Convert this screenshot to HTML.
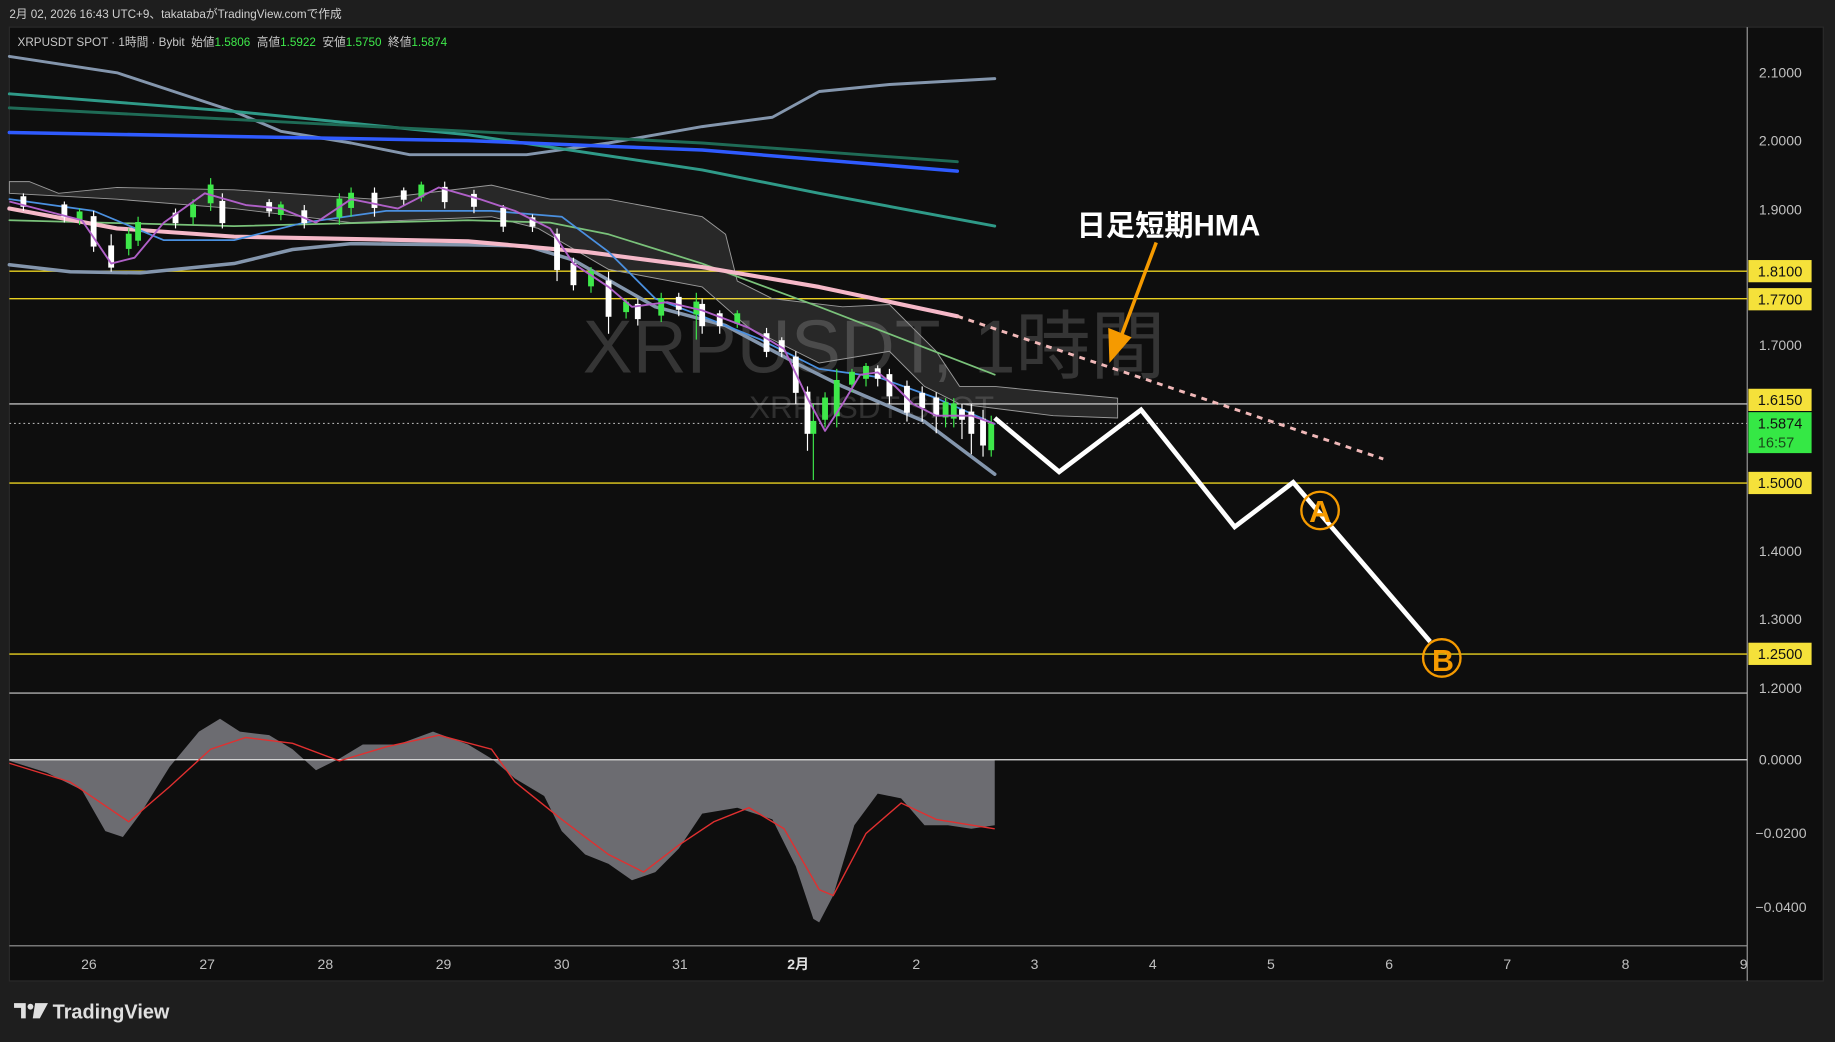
<!DOCTYPE html>
<html><head><meta charset="utf-8"><style>
html,body{margin:0;padding:0;background:#1e1e1e;width:1835px;height:1042px;overflow:hidden}
svg{display:block}
text{font-family:"Liberation Sans","Noto Sans CJK JP",sans-serif}
</style></head><body>
<svg width="1835" height="1042" viewBox="0 0 1568 890" xmlns="http://www.w3.org/2000/svg">
<rect x="0" y="0" width="1568" height="890" fill="#1e1e1e"/>
<text x="8" y="15" font-size="10" fill="#d0d0d0">2月 02, 2026 16:43 UTC+9、takatabaがTradingView.comで作成</text>
<rect x="8" y="23" width="1550" height="815" fill="#0e0e0e" stroke="#2a2a2a"/>
<line x1="1493" y1="23" x2="1493" y2="838" stroke="#9a9a9a" stroke-width="1"/>
<text x="498" y="318" font-size="64" fill="#353535">XRPUSDT, 1時間</text>
<text x="640" y="357" font-size="27" fill="#303030">XRPUSDT SPOT</text>
<text x="15" y="39" font-size="10" fill="#c8c8c8" xml:space="preserve">XRPUSDT SPOT · 1時間 · Bybit  始値<tspan fill="#3ee84a">1.5806</tspan>  高値<tspan fill="#3ee84a">1.5922</tspan>  安値<tspan fill="#3ee84a">1.5750</tspan>  終値<tspan fill="#3ee84a">1.5874</tspan></text>
<g stroke="#e8d020" stroke-width="1.2">
<line x1="8" y1="231.5" x2="1493" y2="231.5"/><line x1="8" y1="255" x2="1493" y2="255"/>
<line x1="8" y1="412.6" x2="1493" y2="412.6"/><line x1="8" y1="558.7" x2="1493" y2="558.7"/>
</g>
<line x1="8" y1="345" x2="1493" y2="345" stroke="#e0e0e0" stroke-width="1"/>
<line x1="8" y1="361.6" x2="1493" y2="361.6" stroke="#b0b0b0" stroke-width="1" stroke-dasharray="1.5,2.5"/>
<polygon fill="rgba(255,255,255,0.11)" stroke="#9a9a9a" stroke-width="0.8" points="8,155 25,155 50,165 100,160 200,162 320,170 420,158 470,170 520,170 600,185 620,200 630,240 660,255 720,262 760,260 780,280 800,300 820,330 850,330 900,335 955,340 955,357 900,355 820,345 790,330 760,300 700,310 640,280 600,245 520,230 460,195 420,185 300,190 200,178 100,170 8,165"/>
<g fill="none" stroke-linejoin="round" stroke-linecap="round">
<polyline stroke="#8496ad" stroke-width="2.5" points="8,48 100,62 200,95 240,112 300,122 350,132 450,132 520,122 600,108 660,100 700,78 760,72 850,67"/>
<polyline stroke="#8496ad" stroke-width="3" points="8,226 60,232 120,233 200,225 250,213 300,208 400,209 450,210 490,222 560,262 620,278 680,310 720,330 790,360 850,405"/>
<polyline stroke="#2f9a88" stroke-width="2.5" points="8,80 200,95 400,115 600,145 700,165 850,193"/>
<polyline stroke="#1f6b56" stroke-width="2.5" points="8,92 300,107 600,122 818,138"/>
<polyline stroke="#2f5bff" stroke-width="3" points="8,113 400,120 600,128 818,146"/>
<polyline stroke="#7ac27a" stroke-width="1.5" points="8,188 200,193 400,188 470,190 520,200 600,225 700,262 850,320"/>
<polyline stroke="#f5b8c8" stroke-width="3.5" points="8,178 100,195 200,202 400,206 500,215 600,228 700,245 818,270"/>
<polyline stroke="#4a90e0" stroke-width="1.5" points="8,170 80,180 140,205 200,205 260,190 330,180 420,180 480,185 520,215 560,255 600,270 650,290 700,315 750,322 800,340 850,362"/>
</g>
<line x1="818" y1="270" x2="1182" y2="392" stroke="#f0b8b8" stroke-width="2.5" stroke-dasharray="5,5"/>
<g stroke-width="1">
<g stroke="#fff" fill="#fff">
<line x1="20" y1="165" x2="20" y2="180"/><rect x="18" y="168" width="4" height="8"/>
<line x1="55" y1="172" x2="55" y2="190"/><rect x="53" y="175" width="4" height="10"/>
<line x1="80" y1="180" x2="80" y2="215"/><rect x="78" y="185" width="4" height="25"/>
<line x1="95" y1="200" x2="95" y2="232"/><rect x="93" y="210" width="4" height="18"/>
<line x1="150" y1="178" x2="150" y2="195"/><rect x="148" y="182" width="4" height="8"/>
<line x1="190" y1="165" x2="190" y2="195"/><rect x="188" y="172" width="4" height="18"/>
<line x1="230" y1="170" x2="230" y2="185"/><rect x="228" y="173" width="4" height="7"/>
<line x1="260" y1="175" x2="260" y2="195"/><rect x="258" y="180" width="4" height="10"/>
<line x1="320" y1="160" x2="320" y2="185"/><rect x="318" y="165" width="4" height="12"/>
<line x1="345" y1="160" x2="345" y2="175"/><rect x="343" y="163" width="4" height="7"/>
<line x1="380" y1="155" x2="380" y2="178"/><rect x="378" y="160" width="4" height="12"/>
<line x1="405" y1="162" x2="405" y2="182"/><rect x="403" y="166" width="4" height="10"/>
<line x1="430" y1="175" x2="430" y2="198"/><rect x="428" y="178" width="4" height="15"/>
<line x1="455" y1="183" x2="455" y2="198"/><rect x="453" y="186" width="4" height="7"/>
<line x1="476" y1="195" x2="476" y2="240"/><rect x="474" y="200" width="4" height="30"/>
<line x1="490" y1="220" x2="490" y2="248"/><rect x="488" y="225" width="4" height="18"/>
<line x1="520" y1="232" x2="520" y2="285"/><rect x="518" y="240" width="4" height="30"/>
<line x1="545" y1="255" x2="545" y2="278"/><rect x="543" y="260" width="4" height="12"/>
<line x1="580" y1="250" x2="580" y2="270"/><rect x="578" y="254" width="4" height="10"/>
<line x1="600" y1="255" x2="600" y2="285"/><rect x="598" y="260" width="4" height="18"/>
<line x1="615" y1="265" x2="615" y2="285"/><rect x="613" y="268" width="4" height="10"/>
<line x1="655" y1="280" x2="655" y2="305"/><rect x="653" y="285" width="4" height="15"/>
<line x1="668" y1="288" x2="668" y2="305"/><rect x="666" y="291" width="4" height="9"/>
<line x1="680" y1="300" x2="680" y2="345"/><rect x="678" y="305" width="4" height="30"/>
<line x1="690" y1="330" x2="690" y2="385"/><rect x="688" y="335" width="4" height="35"/>
<line x1="750" y1="312" x2="750" y2="330"/><rect x="748" y="315" width="4" height="8"/>
<line x1="760" y1="315" x2="760" y2="345"/><rect x="758" y="320" width="4" height="18"/>
<line x1="775" y1="325" x2="775" y2="360"/><rect x="773" y="330" width="4" height="22"/>
<line x1="788" y1="330" x2="788" y2="360"/><rect x="786" y="336" width="4" height="12"/>
<line x1="800" y1="335" x2="800" y2="370"/><rect x="798" y="340" width="4" height="15"/>
<line x1="822" y1="345" x2="822" y2="375"/><rect x="820" y="350" width="4" height="8"/>
<line x1="830" y1="345" x2="830" y2="388"/><rect x="828" y="352" width="4" height="18"/>
<line x1="840" y1="350" x2="840" y2="390"/><rect x="838" y="358" width="4" height="22"/>
</g>
<g stroke="#3ee84a" fill="#3ee84a">
<line x1="68" y1="178" x2="68" y2="192"/><rect x="66" y="181" width="4" height="6"/>
<line x1="110" y1="195" x2="110" y2="218"/><rect x="108" y="200" width="4" height="12"/>
<line x1="118" y1="185" x2="118" y2="210"/><rect x="116" y="190" width="4" height="15"/>
<line x1="165" y1="170" x2="165" y2="192"/><rect x="163" y="175" width="4" height="10"/>
<line x1="180" y1="152" x2="180" y2="180"/><rect x="178" y="158" width="4" height="15"/>
<line x1="240" y1="172" x2="240" y2="188"/><rect x="238" y="175" width="4" height="8"/>
<line x1="290" y1="165" x2="290" y2="192"/><rect x="288" y="170" width="4" height="15"/>
<line x1="300" y1="160" x2="300" y2="185"/><rect x="298" y="165" width="4" height="12"/>
<line x1="360" y1="155" x2="360" y2="172"/><rect x="358" y="158" width="4" height="10"/>
<line x1="505" y1="228" x2="505" y2="250"/><rect x="503" y="232" width="4" height="12"/>
<line x1="535" y1="255" x2="535" y2="272"/><rect x="533" y="258" width="4" height="8"/>
<line x1="565" y1="250" x2="565" y2="275"/><rect x="563" y="255" width="4" height="14"/>
<line x1="595" y1="250" x2="595" y2="290"/><rect x="593" y="258" width="4" height="10"/>
<line x1="630" y1="265" x2="630" y2="280"/><rect x="628" y="268" width="4" height="8"/>
<line x1="695" y1="345" x2="695" y2="410"/><rect x="693" y="360" width="4" height="10"/>
<line x1="705" y1="335" x2="705" y2="365"/><rect x="703" y="340" width="4" height="18"/>
<line x1="715" y1="315" x2="715" y2="365"/><rect x="713" y="325" width="4" height="30"/>
<line x1="728" y1="315" x2="728" y2="335"/><rect x="726" y="318" width="4" height="10"/>
<line x1="740" y1="310" x2="740" y2="330"/><rect x="738" y="313" width="4" height="10"/>
<line x1="808" y1="340" x2="808" y2="365"/><rect x="806" y="344" width="4" height="12"/>
<line x1="815" y1="340" x2="815" y2="365"/><rect x="813" y="345" width="4" height="12"/>
<line x1="847" y1="355" x2="847" y2="390"/><rect x="845" y="362" width="4" height="22"/>
</g>
</g>
<polyline fill="none" stroke="#b060c8" stroke-width="1.6" stroke-linejoin="round" points="8,172 70,188 95,225 115,220 140,190 175,165 210,175 240,178 270,190 300,170 340,178 375,160 410,170 440,180 470,195 490,225 520,245 540,262 570,258 600,265 640,280 670,298 690,340 705,368 720,345 735,320 750,318 765,330 780,345 800,355 830,355 850,362"/>
<polyline fill="none" stroke="#fff" stroke-width="4" points="850,357 905,403 975,350 1055,450 1105,412 1222,548"/>
<g fill="none" stroke="#f59a00" stroke-width="2">
<circle cx="1128" cy="436" r="16"/><circle cx="1232" cy="562" r="16"/>
</g>
<text x="1128" y="446" font-size="26" font-weight="bold" fill="#f59a00" text-anchor="middle">A</text>
<text x="1233" y="573" font-size="26" font-weight="bold" fill="#f59a00" text-anchor="middle">B</text>
<line x1="988" y1="207" x2="957" y2="290" stroke="#f59a00" stroke-width="3"/>
<polygon points="948,310 947,280 967,288" fill="#f59a00"/>
<text x="920" y="201" font-size="25" font-weight="bold" fill="#fff">日足短期HMA</text>
<line x1="8" y1="592" x2="1493" y2="592" stroke="#d0d0d0" stroke-width="1"/>
<polygon fill="rgba(125,125,130,0.85)" points="8,649 8,650 40,660 70,675 90,710 105,715 120,695 145,655 170,625 188,614 205,625 230,628 250,640 270,658 290,648 310,636 340,636 370,625 400,636 420,648 440,665 465,680 480,710 500,730 520,738 540,752 560,745 580,725 600,695 630,690 660,700 680,740 695,785 700,788 712,765 730,705 750,678 770,682 790,705 810,705 830,708 850,705 850,649"/>
<line x1="8" y1="649" x2="1493" y2="649" stroke="#e0e0e0" stroke-width="1"/>
<polyline fill="none" stroke="#e03030" stroke-width="1.2" points="8,652 60,668 110,702 145,672 180,640 210,630 250,635 290,650 330,638 375,628 420,640 440,668 480,700 520,730 550,745 580,722 610,702 640,690 670,708 700,760 712,765 740,712 770,686 800,700 850,708"/>
<line x1="8" y1="808" x2="1493" y2="808" stroke="#9a9a9a" stroke-width="1"/>
<g font-size="12" fill="#c0c0c0" text-anchor="middle">
<text x="76" y="828">26</text><text x="177" y="828">27</text><text x="278" y="828">28</text><text x="379" y="828">29</text><text x="480" y="828">30</text><text x="581" y="828">31</text><text x="682" y="828" font-weight="bold" fill="#e0e0e0">2月</text><text x="783" y="828">2</text><text x="884" y="828">3</text><text x="985" y="828">4</text><text x="1086" y="828">5</text><text x="1187" y="828">6</text><text x="1288" y="828">7</text><text x="1389" y="828">8</text><text x="1490" y="828">9</text>
</g>
<g font-size="12" fill="#c0c0c0">
<text x="1503" y="66">2.1000</text><text x="1503" y="124">2.0000</text><text x="1503" y="183">1.9000</text><text x="1503" y="299">1.7000</text><text x="1503" y="475">1.4000</text><text x="1503" y="533">1.3000</text><text x="1503" y="592">1.2000</text>
<text x="1503" y="653">0.0000</text><text x="1500" y="716">−0.0200</text><text x="1500" y="779">−0.0400</text>
</g>
<g font-size="12.5" fill="#111">
<rect x="1494" y="222" width="54" height="19" fill="#f5e13a"/><text x="1502" y="236">1.8100</text>
<rect x="1494" y="246" width="54" height="19" fill="#f5e13a"/><text x="1502" y="260">1.7700</text>
<rect x="1494" y="332" width="54" height="19" fill="#f5e13a"/><text x="1502" y="346">1.6150</text>
<rect x="1494" y="352" width="54" height="35" fill="#35e845"/><text x="1502" y="366">1.5874</text><text x="1502" y="382" fill="#1a4a1a">16:57</text>
<rect x="1494" y="403" width="54" height="19" fill="#f5e13a"/><text x="1502" y="417">1.5000</text>
<rect x="1494" y="549" width="54" height="19" fill="#f5e13a"/><text x="1502" y="563">1.2500</text>
</g>
<g fill="#e0e0e0">
<path d="M12 857 H22 V870 H18 V861 H12 Z"/><circle cx="26" cy="860" r="2.5"/><path d="M30 857 H41 L34 870 H28 Z"/>
</g>
<text x="45" y="870" font-size="17" font-weight="bold" fill="#e0e0e0">TradingView</text>
</svg>
</body></html>
